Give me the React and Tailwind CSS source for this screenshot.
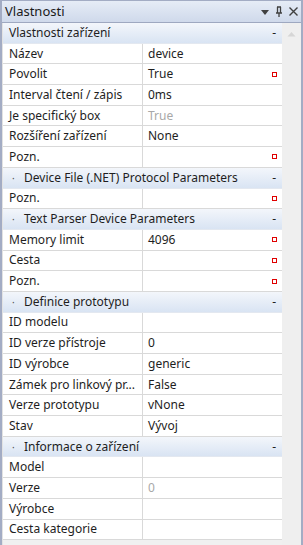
const sections = [
  {
    title: "Vlastnosti zařízení",
    bullet: false,
    rows: [
      { name: "Název", value: "device" },
      { name: "Povolit", value: "True", mark: true },
      { name: "Interval čtení / zápis", value: "0ms" },
      { name: "Je specifický box", value: "True", muted: true },
      { name: "Rozšíření zařízení", value: "None" },
      { name: "Pozn.", value: "", mark: true },
    ],
  },
  {
    title: "Device File (.NET) Protocol Parameters",
    bullet: true,
    rows: [{ name: "Pozn.", value: "", mark: true }],
  },
  {
    title: "Text Parser Device Parameters",
    bullet: true,
    rows: [
      { name: "Memory limit", value: "4096", mark: true },
      { name: "Cesta", value: "", mark: true },
      { name: "Pozn.", value: "", mark: true },
    ],
  },
  {
    title: "Definice prototypu",
    bullet: true,
    rows: [
      { name: "ID modelu", value: "" },
      { name: "ID verze přístroje", value: "0" },
      { name: "ID výrobce", value: "generic" },
      { name: "Zámek pro linkový pr...", value: "False" },
      { name: "Verze prototypu", value: "vNone" },
      { name: "Stav", value: "Vývoj" },
    ],
  },
  {
    title: "Informace o zařízení",
    bullet: true,
    rows: [
      { name: "Model", value: "" },
      { name: "Verze", value: "0", muted: true },
      { name: "Výrobce", value: "" },
      { name: "Cesta kategorie", value: "" },
    ],
  },
];

function SectionHeader({ title, bullet }) {
  return (
    <div className="flex h-[20.7px] items-center border-b border-[#e3e8f0] bg-gradient-to-b from-[#f3f6fb] to-[#d9e4f3] pl-[6px] pr-[6px]">
      {bullet && <span className="w-[15px] pl-[3px] text-[10px] leading-none text-[#555]">·</span>}
      <span className="flex-1 text-[#1e1e1e]">{title}</span>
      <span className="text-[#222]">-</span>
    </div>
  );
}

function PropRow({ name, value, mark, muted }) {
  return (
    <div className="flex h-[20.7px] border-b border-[#d9d9d9] bg-white">
      <div className="flex w-[140px] items-center overflow-hidden whitespace-nowrap border-r border-[#d9d9d9] pl-[6px] text-[#1e1e1e]">
        {name}
      </div>
      <div className="flex flex-1 items-center pl-[5px] pr-[5px]">
        <span className={muted ? "flex-1 text-[#a8a8a8]" : "flex-1 text-[#1e1e1e]"}>{value}</span>
        {mark && <span className="h-[5px] w-[5px] border border-[#e00000]" />}
      </div>
    </div>
  );
}

export default function App() {
  return (
    <div className="flex h-[545px] w-[303px] flex-col overflow-hidden border-x-2 border-t border-[#a3acc4] bg-[#f0f0f0] font-['Noto_Sans',sans-serif] text-[12px]">
      {/* title bar */}
      <div className="flex h-[22px] items-center border-b border-[#9ea8c0] bg-gradient-to-b from-[#e6ecf6] to-[#cfd9eb] pl-[3px] pr-[2px]">
        <span className="flex-1 text-[13px] text-[#1a1a1a]">Vlastnosti</span>
        <div className="flex items-center gap-[4px] text-[#404040]">
          <svg width="10" height="10" viewBox="0 0 10 10">
            <path d="M1 3h8L5 8z" fill="#404040" />
          </svg>
          <svg width="10" height="12" viewBox="0 0 10 12">
            <path d="M3 1h4M3.5 1v6M6.5 1v6M2 7h6M5 7v4" stroke="#404040" strokeWidth="1.3" fill="none" />
          </svg>
          <svg width="11" height="11" viewBox="0 0 11 11">
            <path d="M1.5 1.5l8 8M9.5 1.5l-8 8" stroke="#404040" strokeWidth="1.4" />
          </svg>
        </div>
      </div>

      <div className="flex flex-1">
        {/* property grid */}
        <div className="w-[280px] border-l border-[#e2e2e2]">
          {sections.map((s) => (
            <div key={s.title}>
              <SectionHeader title={s.title} bullet={s.bullet} />
              {s.rows.map((r, i) => (
                <PropRow key={i} {...r} />
              ))}
            </div>
          ))}
        </div>

        {/* scrollbar */}
        <div className="flex flex-1 justify-center bg-[#efefef] pt-[8px]">
          <svg width="9" height="6" viewBox="0 0 9 6">
            <path d="M0.5 5.5L4.5 1l4 4.5z" fill="#d6d6d6" />
          </svg>
        </div>
      </div>
    </div>
  );
}
